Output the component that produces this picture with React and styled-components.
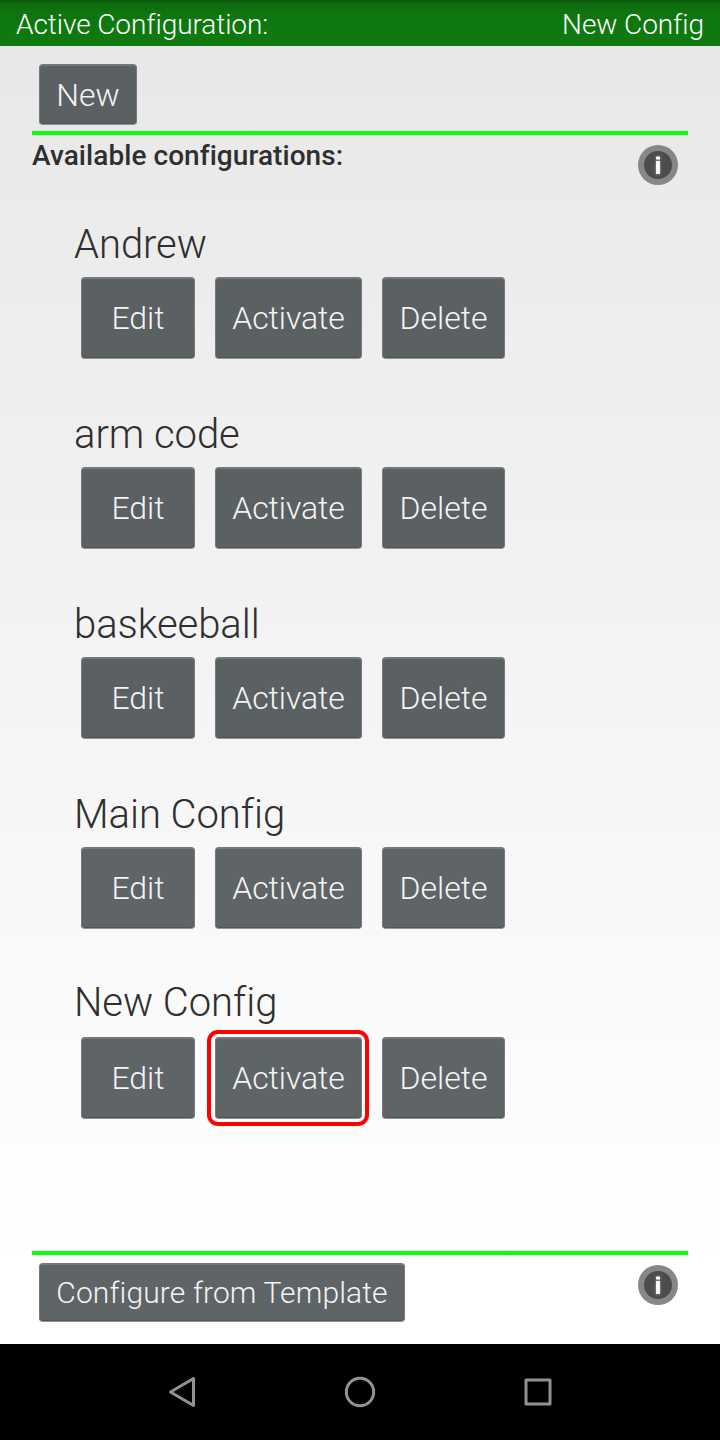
import React from "react";
import styled, { createGlobalStyle } from "styled-components";

const GlobalStyle = createGlobalStyle`
  * { box-sizing: border-box; }
  body {
    margin: 0;
    font-family: Roboto, "Liberation Sans", sans-serif;
    font-weight: 300;
    color: #2f2f2f;
  }
`;

const Screen = styled.div`
  width: 720px;
  height: 1440px;
  display: flex;
  flex-direction: column;
  overflow: hidden;
  background: linear-gradient(#e8e8e8 0, #e8e8e8 46px, #ffffff 1250px);
`;

const Header = styled.header`
  height: 46px;
  flex: none;
  display: flex;
  justify-content: space-between;
  padding: 0 16px;
  font-size: 28px;
  line-height: 49px;
  letter-spacing: -0.08px;
  color: #fff;
  background: linear-gradient(#0b560b 0, #0d680d 3px, #0f740f 12px, #0f790f 28px);
`;

const Content = styled.main`
  flex: 1;
  display: flex;
  flex-direction: column;
  padding: 18px 32px 0;
`;

const Toolbar = styled.div`
  height: 67px;
  padding-left: 7px;
`;

const Divider = styled.div`
  height: 4px;
  flex: none;
  background: #0aff0a;
`;

const ListHeading = styled.div`
  height: 75px;
  display: flex;
  justify-content: space-between;
  padding: 10px 10px 0 0;
`;

const ListTitle = styled.h2`
  margin: -6px 0 0;
  font-size: 28px;
  line-height: 34px;
  font-weight: 500;
  letter-spacing: 0.06px;
`;

const ConfigList = styled.div`
  height: 1041px;
  padding-left: 42px;
`;

const ConfigItem = styled.section`
  height: 190px;
  padding-top: ${(p) => (p.$raised ? 9 : 11)}px;
`;

const ConfigName = styled.h3`
  height: ${(p) => (p.$raised ? 58 : 56)}px;
  margin: 0;
  font-size: 40px;
  line-height: 48px;
  font-weight: 300;
  letter-spacing: -0.05px;
`;

const Actions = styled.div`
  display: flex;
  gap: 20px;
  padding-left: 7px;
`;

const Button = styled.button`
  position: relative;
  display: block;
  width: ${(p) => p.$w}px;
  height: ${(p) => p.$h}px;
  padding: 0 0 ${(p) => p.$lift || 1}px;
  border: 1px solid #777a7c;
  border-top: 2px solid #75787a;
  border-bottom-color: #929495;
  border-radius: 4px;
  background: ${(p) => (p.$light ? "#5f6467" : "#5b6063")};
  box-shadow: inset 0 -1px 0 #505456;
  color: #f4f4f4;
  font: 300 ${(p) => p.$size || 32}px Roboto, "Liberation Sans", sans-serif;
  letter-spacing: ${(p) => p.$tracking || 0}px;
  white-space: nowrap;
`;

const Highlight = styled.span`
  position: absolute;
  inset: -9px -8px -8px -9px;
  border: 4px solid #ff0000;
  border-radius: 11px;
`;

const Footer = styled.footer`
  display: flex;
  justify-content: space-between;
  padding: 8px 10px 0 7px;
`;

const NavBar = styled.nav`
  height: 96px;
  flex: none;
  display: flex;
  justify-content: center;
  align-items: center;
  gap: 130px;
  background: #000;

  svg {
    fill: none;
    stroke: #929292;
    stroke-width: 3;
    stroke-linejoin: round;
  }
`;

const InfoSvg = styled.svg`
  flex: none;
  margin-top: ${(p) => p.$top || 0}px;
  .mark {
    fill: #fff;
    filter: drop-shadow(0 0 1.5px rgba(255, 255, 255, 0.55));
  }
`;

function InfoIcon({ top }) {
  return (
    <InfoSvg width="40" height="40" viewBox="0 0 40 40" $top={top}>
      <circle cx="20" cy="20" r="20" fill="#878787" />
      <circle cx="20" cy="20" r="14" fill="#4c4c4c" />
      <g className="mark">
        <rect x="18" y="11.4" width="4" height="3.2" rx="1.2" />
        <rect x="18.1" y="16" width="3.8" height="13" />
      </g>
    </InfoSvg>
  );
}

const configs = ["Andrew", "arm code", "baskeeball", "Main Config", "New Config"];
const activeConfig = "New Config";

export default function App() {
  return (
    <Screen>
      <GlobalStyle />
      <Header>
        <span>Active Configuration:</span>
        <span>{activeConfig}</span>
      </Header>
      <Content>
        <Toolbar>
          <Button $w={98} $h={61}>New</Button>
        </Toolbar>
        <Divider />
        <ListHeading>
          <ListTitle>Available configurations:</ListTitle>
          <InfoIcon />
        </ListHeading>
        <ConfigList>
          {configs.map((name, i) => {
            const active = name === activeConfig;
            return (
              <ConfigItem key={name} $raised={active}>
                <ConfigName $raised={active}>{name}</ConfigName>
                <Actions>
                  <Button $w={114} $h={82} $light={i > 2}>Edit</Button>
                  <Button $w={147} $h={82} $light={i > 2} $tracking={-0.08}>
                    Activate
                    {active && <Highlight />}
                  </Button>
                  <Button $w={123} $h={82} $light={i > 2} $tracking={-0.05}>Delete</Button>
                </Actions>
              </ConfigItem>
            );
          })}
        </ConfigList>
        <Divider />
        <Footer>
          <Button $w={366} $h={59} $size={30} $lift={2} $tracking={0.13} $light>
            Configure from Template
          </Button>
          <InfoIcon top={2} />
        </Footer>
      </Content>
      <NavBar>
        <svg width="48" height="48" viewBox="0 0 48 48">
          <path d="M35.5 10.5V37.5L12.5 24Z" />
        </svg>
        <svg width="48" height="48" viewBox="0 0 48 48">
          <circle cx="24" cy="24" r="13.7" />
        </svg>
        <svg width="48" height="48" viewBox="0 0 48 48">
          <rect x="12" y="12" width="24" height="24" />
        </svg>
      </NavBar>
    </Screen>
  );
}
